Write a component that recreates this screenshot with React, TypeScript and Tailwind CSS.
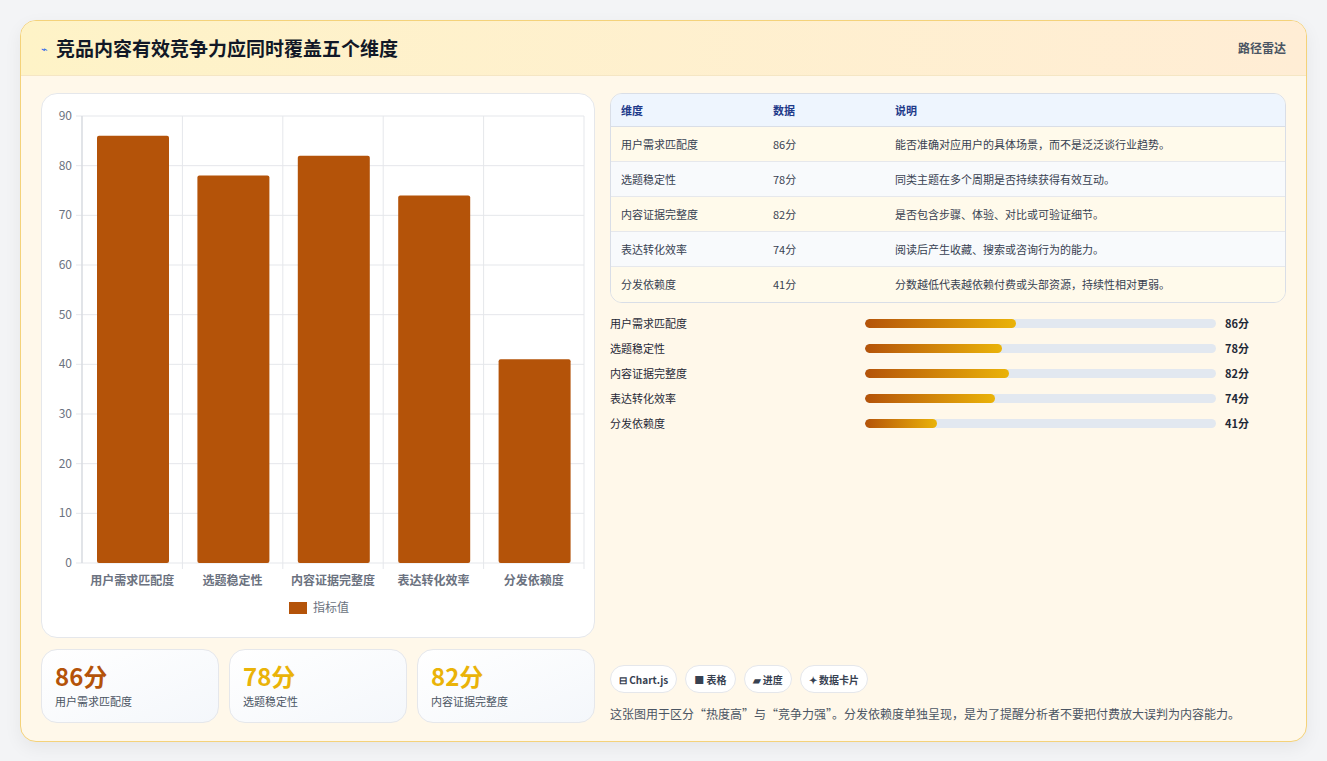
import React from "react";

const rows = [
  { name: "用户需求匹配度", value: 86, note: "能否准确对应用户的具体场景，而不是泛泛谈行业趋势。" },
  { name: "选题稳定性", value: 78, note: "同类主题在多个周期是否持续获得有效互动。" },
  { name: "内容证据完整度", value: 82, note: "是否包含步骤、体验、对比或可验证细节。" },
  { name: "表达转化效率", value: 74, note: "阅读后产生收藏、搜索或咨询行为的能力。" },
  { name: "分发依赖度", value: 41, note: "分数越低代表越依赖付费或头部资源，持续性相对更弱。" },
];

function BarChart() {
  // plot area in svg coords
  const x0 = 40, x1 = 542, yTop = 22, yBot = 469;
  const step = (yBot - yTop) / 9;
  const cat = (x1 - x0) / 5;
  return (
    <svg width="554" height="543" className="block">
      {Array.from({ length: 10 }).map((_, i) => {
        const y = yBot - i * step;
        return (
          <g key={i}>
            <line x1={x0 - 6} x2={x1} y1={y} y2={y} stroke="#e5e7eb" />
            <text x={x0 - 10} y={y + 4} textAnchor="end" fontSize="12" fill="#6b7280">{i * 10}</text>
          </g>
        );
      })}
      {Array.from({ length: 6 }).map((_, i) => (
        <line key={i} x1={x0 + i * cat} x2={x0 + i * cat} y1={yTop} y2={yBot + (i === 0 ? 0 : 6)} stroke="#e5e7eb" />
      ))}
      <line x1={x0} x2={x0} y1={yTop} y2={yBot} stroke="#d1d5db" />
      {rows.map((r, i) => {
        const h = (r.value / 10) * step;
        const bx = x0 + i * cat + 15;
        return (
          <g key={r.name}>
            <rect x={bx} y={yBot - h} width={72} height={h} fill="#b45309" rx="2" />
            <text x={x0 + i * cat + cat / 2} y={yBot + 22} textAnchor="middle" fontSize="12" fill="#6b7280" fontWeight="600">{r.name}</text>
          </g>
        );
      })}
      <rect x="247" y="508" width="18" height="12" fill="#b45309" />
      <text x="271" y="518" fontSize="12" fill="#6b7280">指标值</text>
    </svg>
  );
}

export default function App() {
  return (
    <div className="min-h-[761px] bg-[#f3f4f6] px-5 pt-5 pb-5" style={{ fontFamily: '"Noto Sans CJK SC", "Noto Sans", sans-serif' }}>
      <div className="rounded-2xl border border-[#f4d27a] bg-[#fff8ea] overflow-hidden shadow-[0_6px_18px_rgba(0,0,0,0.06)]">
        <div className="h-[55px] flex items-center justify-between px-5 border-b border-[#f5e6c4] bg-gradient-to-r from-[#fef3c7] to-[#ffedd5]">
          <div className="flex items-center gap-2">
            <span className="text-[11px] text-[#2563eb]">⌁</span>
            <h1 className="text-[19px] font-bold text-[#111827]">竞品内容有效竞争力应同时覆盖五个维度</h1>
          </div>
          <span className="text-[12px] font-semibold text-[#4b5563]">路径雷达</span>
        </div>
        <div className="flex gap-[15px] px-5 pt-[17px] pb-[18px]">
          <div className="w-[554px] flex flex-col gap-[11px]">
            <div className="rounded-2xl border border-[#e5e7eb] bg-white">
              <BarChart />
            </div>
            <div className="flex gap-[10px]">
              {rows.slice(0, 3).map((r, i) => (
                <div key={r.name} className="w-[178px] h-[74px] rounded-2xl border border-[#e5e7eb] bg-gradient-to-br from-white to-[#f4f7fb] px-[13px] pt-[11px]">
                  <div className={`text-[24px] font-bold leading-[30px] ${i === 0 ? "text-[#b45309]" : "text-[#eab308]"}`}>{r.value}分</div>
                  <div className="text-[11px] text-[#4b5563] mt-[2px]">{r.name}</div>
                </div>
              ))}
            </div>
          </div>
          <div className="flex-1 flex flex-col">
            <div className="rounded-xl border border-[#d9dee7] overflow-hidden">
              <div className="flex h-[33px] items-center bg-[#eef5fe] border-b border-[#d9dee7] text-[11px] font-semibold text-[#1e3a8a]">
                <div className="w-[162px] pl-[10px]">维度</div>
                <div className="w-[122px]">数据</div>
                <div>说明</div>
              </div>
              {rows.map((r, i) => (
                <div key={r.name} className={`flex h-[35px] items-center text-[11px] text-[#374151] ${i < 4 ? "border-b border-[#e6e8ec]" : ""} ${i % 2 === 0 ? "bg-[#fffaeb]" : "bg-[#f8fafc]"}`}>
                  <div className="w-[162px] pl-[10px]">{r.name}</div>
                  <div className="w-[122px]">{r.value}分</div>
                  <div>{r.note}</div>
                </div>
              ))}
            </div>
            <div className="mt-[11px] flex flex-col gap-[7px]">
              {rows.map((r) => (
                <div key={r.name} className="flex items-center h-[18px]">
                  <div className="w-[255px] text-[11px] text-[#1f2937]">{r.name}</div>
                  <div className="w-[351px] h-[9px] rounded-full bg-[#e2e8f0] overflow-hidden">
                    <div className="h-full rounded-full bg-gradient-to-r from-[#b45309] to-[#eab308]" style={{ width: `${r.value / 2}%` }} />
                  </div>
                  <div className="ml-[9px] text-[11px] font-bold text-[#1f2937]">{r.value}分</div>
                </div>
              ))}
            </div>
            <div className="mt-auto flex gap-[8px]">
              {["⊟ Chart.js", "■ 表格", "▰ 进度", "✦ 数据卡片"].map((t) => (
                <span key={t} className="h-[28px] px-[8px] flex items-center rounded-full border border-[#e5e7eb] bg-white text-[10px] font-semibold text-[#374151]">{t}</span>
              ))}
            </div>
            <p className="mt-[12px] text-[12px] text-[#4b5563] leading-[18px]">这张图用于区分“热度高”与“竞争力强”。分发依赖度单独呈现，是为了提醒分析者不要把付费放大误判为内容能力。</p>
          </div>
        </div>
      </div>
    </div>
  );
}
